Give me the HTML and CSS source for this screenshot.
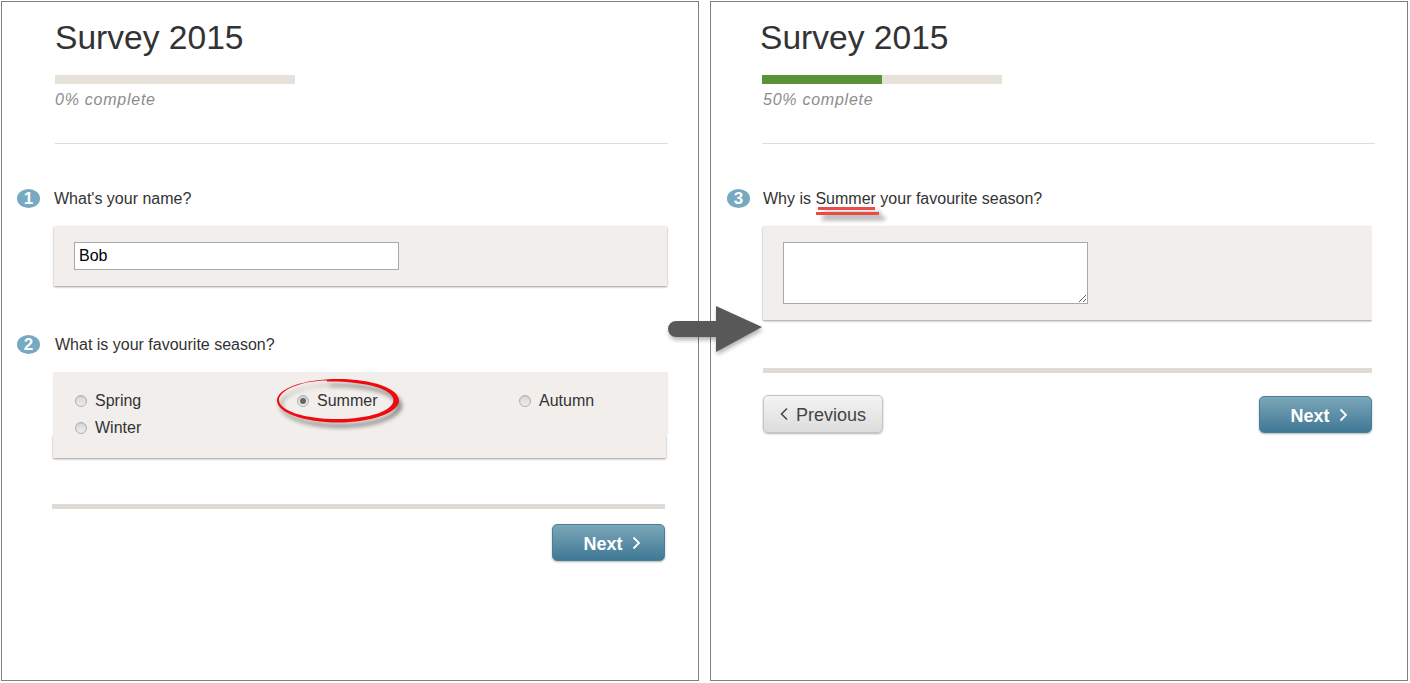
FILE: index.html
```html
<!DOCTYPE html>
<html lang="en">
<head>
<meta charset="utf-8">
<title>Survey 2015</title>
<link rel="stylesheet" href="styles.css">
</head>
<body>
<main class="stage">
  <section class="panel panel-a">
    <h1 class="title">Survey 2015</h1>
    <div class="progress"></div>
    <p class="progress-label">0% complete</p>
    <hr class="divider">
    <div class="question">
      <span class="badge">1</span>
      <span class="q-text">What's your name?</span>
    </div>
    <div class="card card-name">
      <input class="text-input" type="text" value="Bob">
    </div>
    <div class="question question-2">
      <span class="badge">2</span>
      <span class="q-text">What is your favourite season?</span>
    </div>
    <div class="season-card">
      <div class="season-top">
        <div class="choices">
          <label class="choice"><span class="radio"></span>Spring</label>
          <label class="choice"><span class="radio radio-on"></span>Summer</label>
          <label class="choice"><span class="radio"></span>Autumn</label>
          <label class="choice"><span class="radio"></span>Winter</label>
        </div>
      </div>
      <div class="season-bottom"></div>
    </div>
    <div class="rule"></div>
    <div class="actions actions-end">
      <button class="btn btn-next" type="button"><span class="btn-label">Next</span>
        <svg class="chev" width="9" height="14" viewBox="0 0 9 14"><path d="M1.500 1.500 7 7l-5.500 5.500" fill="none" stroke="currentColor" stroke-width="1.800"/></svg>
      </button>
    </div>
  </section>

  <section class="panel panel-b">
    <h1 class="title">Survey 2015</h1>
    <div class="progress"><div class="progress-fill"></div></div>
    <p class="progress-label">50% complete</p>
    <hr class="divider">
    <div class="question">
      <span class="badge">3</span>
      <span class="q-text">Why is Summer your favourite season?</span>
    </div>
    <div class="card card-why">
      <textarea class="text-area"></textarea>
    </div>
    <div class="rule"></div>
    <div class="actions">
      <button class="btn btn-prev" type="button">
        <svg class="chev" width="9" height="14" viewBox="0 0 9 14"><path d="M7 1.500 1.500 7 7 12.500" fill="none" stroke="currentColor" stroke-width="1.500"/></svg>
        <span class="btn-label">Previous</span>
      </button>
      <button class="btn btn-next" type="button"><span class="btn-label">Next</span>
        <svg class="chev" width="9" height="14" viewBox="0 0 9 14"><path d="M1.500 1.500 7 7l-5.500 5.500" fill="none" stroke="currentColor" stroke-width="1.800"/></svg>
      </button>
    </div>
  </section>

  <svg class="mark mark-circle" width="140" height="60" viewBox="0 0 140 60">
    <path fill="#ee0a0e" fill-rule="evenodd" d="M2 24.500C2 12.500 29 3 63 3s61 9.500 61 21.500S97 46.500 63 46.500 2 36.500 2 24.500ZM4 24C4 35 30 43 62 43s56.500-8 56.500-19C118.500 13 90 5 52 5.400V4.400C30 4.200 4 13 4 24Z"/>
  </svg>
  <svg class="mark mark-underline" width="80" height="20" viewBox="0 0 80 20">
    <rect x="3" y="1" width="57" height="3" fill="#e94b47"/>
    <rect x="1" y="6" width="63" height="3" fill="#e94b47"/>
  </svg>
  <svg class="mark mark-arrow" width="100" height="52" viewBox="0 0 100 52">
    <path fill="#585858" d="M48 0 94 21 48 46V31H8a8 8 0 0 1 0-16h40Z" transform="translate(0 1)"/>
  </svg>
</main>
</body>
</html>
```
FILE: styles.css
```css
* { box-sizing: border-box; }
html, body { margin: 0; padding: 0; background: #fff; }
body {
  font-family: "Liberation Sans", Arial, sans-serif;
  color: #333;
  font-size: 16px;
}
.stage {
  position: relative;
  width: 1410px;
  height: 683px;
  padding: 1px 0 0 1px;
  display: flex;
  gap: 11px;
  overflow: hidden;
}
.panel {
  width: 698px;
  height: 680px;
  border: 1px solid #808080;
  display: flex;
  flex-direction: column;
  align-items: flex-start;
}
.title {
  margin: 16px 0 0;
  font-size: 33.600px;
  line-height: 40px;
  font-weight: 400;
  color: #333;
}
.progress {
  margin-top: 17px;
  width: 240px;
  height: 9px;
  background: #e6e1d9;
}
.progress-fill { width: 50%; height: 100%; background: #5b9238; }
.progress-label {
  margin: 6px 0 0;
  line-height: 20px;
  font-style: italic;
  letter-spacing: .75px;
  color: #8c8c8c;
}
.divider {
  margin: 33px 0 0;
  width: 613px;
  height: 1px;
  border: 0;
  background: #ddd;
}
.question {
  margin-top: 44px;
  height: 20px;
  display: flex;
  align-items: center;
}
.question-2 { margin-top: 48px; }
.badge {
  width: 23px;
  height: 19px;
  border-radius: 50%;
  background: #77a9c0;
  color: #fff;
  font-size: 17px;
  font-weight: 700;
  line-height: 19px;
  text-align: center;
}
.q-text { padding-top: 2px; line-height: 20px; color: #333; }
.card {
  margin-top: 18px;
  background: #f1eeeb;
  box-shadow: 0 1px 2px rgba(0,0,0,.4);
}
.card-name { width: 613px; height: 60px; padding: 16px 20px; }
.card-why { width: 609px; height: 94px; padding: 16px 20px; clip-path: inset(-4px 0 -4px -4px); }
.text-input {
  display: block;
  width: 325px;
  height: 28px;
  padding: 0 4px;
  border: 1px solid #a9a9a9;
  background: #fff;
  color: #000;
  font: 16px "Liberation Sans", Arial, sans-serif;
  outline: 0;
}
.text-area {
  display: block;
  width: 305px;
  height: 62px;
  margin: 0;
  border: 1px solid #a9a9a9;
  background: #fff;
  outline: 0;
}
.season-card { margin-top: 18px; width: 615px; }
.season-top {
  width: 613px;
  margin-left: 1px;
  height: 63px;
  background: #f1eeeb;
  box-shadow: 0 0 2px rgba(0,0,0,.2);
  clip-path: inset(0 -4px 0 -4px);
  padding: 15px 0 0 21px;
}
.season-bottom {
  width: 613px;
  height: 23px;
  background: #f1eeeb;
  box-shadow: 0 1px 2px rgba(0,0,0,.4);
  clip-path: inset(0 -4px -4px -4px);
}
.choices {
  display: grid;
  grid-template-columns: repeat(3, 222px);
  grid-auto-rows: 27px;
}
.choice {
  display: flex;
  align-items: center;
  gap: 8px;
  height: 27px;
  color: #333;
}
.radio {
  width: 12px;
  height: 12px;
  border-radius: 50%;
  border: 1px solid #b0b0b0;
  background: linear-gradient(#d8d8d8, #ececec);
  box-shadow: inset 0 1px 1px rgba(0,0,0,.08);
  display: flex;
  align-items: center;
  justify-content: center;
}
.radio-on::after {
  content: "";
  width: 6px;
  height: 6px;
  border-radius: 50%;
  background: #666;
}
.rule { margin-top: 46px; width: 613px; height: 5px; background: #e0dcd5; }
.actions { display: flex; justify-content: space-between; align-items: flex-start; }
.actions-end { justify-content: flex-end; width: 613px; margin-top: 15px; }
.btn {
  display: flex;
  align-items: center;
  justify-content: center;
  padding: 0;
  border-radius: 5px;
  font-family: "Liberation Sans", Arial, sans-serif;
  font-size: 18px;
}
.btn-label { padding-top: 3px; }
.btn-next {
  width: 113px;
  height: 37px;
  gap: 9px;
  padding-left: 7px;
  font-weight: 700;
  color: #fff;
  border: 1px solid #4a7f99;
  background: linear-gradient(#7ca6b8, #3f7896);
  box-shadow: 0 1px 2px rgba(0,0,0,.3);
}
.btn-prev {
  width: 120px;
  height: 38px;
  gap: 7px;
  margin-top: -1px;
  color: #444;
  border: 1px solid #c4c4c4;
  background: linear-gradient(#f4f4f4, #dcdcdc);
  box-shadow: 0 1px 2px rgba(0,0,0,.3);
}
.panel-a .title { margin-left: 53px; }
.panel-a .progress, .panel-a .progress-label, .panel-a .divider { margin-left: 53px; }
.panel-a .question { margin-left: 15px; gap: 14px; }
.panel-a .question-2 { gap: 15px; }
.panel-a .card, .panel-a .season-card { margin-left: 51px; }
.panel-a .card { margin-left: 52px; }
.panel-a .rule, .panel-a .actions { margin-left: 50px; }
.panel-b .title { margin-left: 49px; }
.panel-b .progress, .panel-b .divider { margin-left: 51px; }
.panel-b .progress-label { margin-left: 52px; }
.panel-b .question { margin-left: 16px; gap: 13px; }
.panel-b .card { margin-left: 52px; }
.panel-b .rule { margin-left: 52px; margin-top: 48px; width: 609px; }
.panel-b .actions { margin-left: 52px; width: 609px; margin-top: 23px; }
.mark { position: absolute; overflow: visible; }
.mark-circle { left: 275px; top: 376px; filter: drop-shadow(3px 5px 2px rgba(0,0,0,.45)); }
.mark-underline { left: 815px; top: 206px; filter: drop-shadow(6px 5px 2px rgba(0,0,0,.4)); }
.mark-arrow { left: 668px; top: 305px; filter: drop-shadow(1px 3px 2px rgba(0,0,0,.3)); }
```
